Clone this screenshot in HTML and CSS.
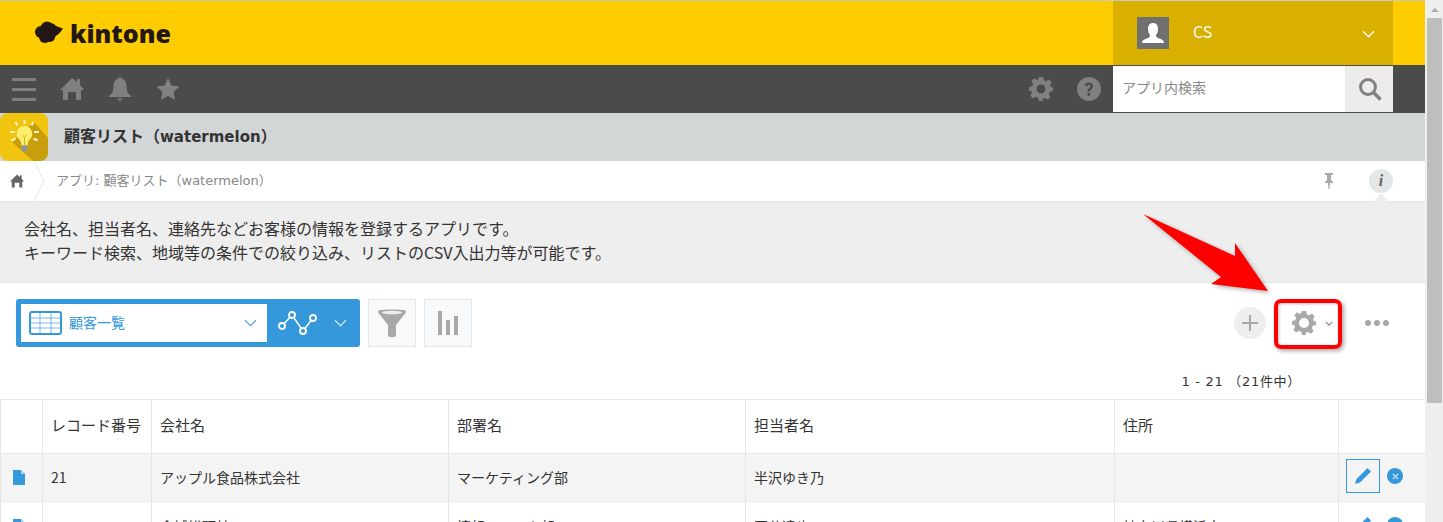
FILE: index.html
```html
<!DOCTYPE html>
<html lang="ja">
<head>
<meta charset="utf-8">
<title>顧客リスト</title>
<link rel="stylesheet" href="styles.css">
</head>
<body>
<div class="page">
  <div class="main">
    <header class="topbar">
      <div class="logo">
        <svg class="logo-cloud" viewBox="0 0 28 23"><g fill="#231815"><circle cx="6" cy="11" r="6"/><circle cx="12" cy="7" r="6.500"/><circle cx="16" cy="11" r="6.500"/><circle cx="10" cy="16" r="6"/><circle cx="15" cy="16" r="5"/><path d="M14 1.500q5 .5 7 3.500l7 2.500q-2.500 4-6 7l-6-4z"/></g></svg>
        <span class="logo-text">kintone</span>
      </div>
      <div class="user">
        <span class="avatar"><svg viewBox="0 0 32 32" width="32" height="32"><path d="M5 26c0-3 3-4 6-5 2-1 2-2 2-3-1-1-2-3-2-6 0-4 2-6 5-6s5 2 5 6c0 3-1 5-2 6 0 1 0 2 2 3 3 1 6 2 6 5z" fill="#fff"/></svg></span>
        <span class="user-name">CS</span>
        <svg class="user-caret" viewBox="0 0 14 8" width="13" height="8"><path d="M1 1l6 6 6-6" fill="none" stroke="#fff" stroke-width="1.400"/></svg>
      </div>
    </header>

    <nav class="navbar">
      <div class="nav-left">
        <svg class="ico" viewBox="0 0 24 24" width="24" height="24"><path d="M0 1h24v3H0zM0 11h24v3H0zM0 21h24v3H0z" fill="#808080"/></svg>
        <svg class="ico" viewBox="0 0 24 24" width="24" height="24"><path d="M12 1l5 4V2h3v6l4 5h-3v10h-5v-8H8v8H3V13H0z" fill="#808080"/></svg>
        <svg class="ico" viewBox="0 0 24 24" width="24" height="24"><path d="M10.500 1.500a1.500 1.500 0 0 1 3 0C17 2.500 18.500 5.500 18.500 9c0 5 1.500 8 4.500 10 .5 .5 0 1-1 1H2c-1 0-1.500-.5-1-1 3-2 4.500-5 4.500-10 0-3.500 1.500-6.500 5-7.500zM9.500 21.500h5c-.5 1.500-1.500 2-2.500 2s-2-.5-2.500-2z" fill="#808080"/></svg>
        <svg class="ico" viewBox="0 0 24 24" width="24" height="24"><path d="M12 1l3.400 7.500 8.100 .9-6 5.500 1.700 8.100-7.200-4.100-7.200 4.100 1.700-8.100-6-5.500 8.100-.9z" fill="#808080"/></svg>
      </div>
      <div class="nav-right">
        <svg class="ico" viewBox="0 0 24 24" width="24" height="24"><path fill-rule="evenodd" d="M10 0h4l.7 3.300 2.300 1 2.900-1.800 2.800 2.800L21 8.200l.9 2.200L24 10v4l-3.200.7-1 2.300 1.800 2.900-2.800 2.800-2.900-1.800-2.200.9L14 24h-4l-.7-3.200-2.300-1-2.900 1.800-2.800-2.800L3 15.900l-.9-2.200L0 14v-4l3.200-.7 1-2.300-1.800-2.900 2.800-2.800L7.100 3l2.200-.9zM12 7.500a4.500 4.500 0 1 0 0 9 4.500 4.500 0 0 0 0-9z" fill="#808080"/></svg>
        <svg class="ico" viewBox="0 0 24 24" width="24" height="24"><circle cx="12" cy="12" r="12" fill="#808080"/><path d="M8 9c0-2.500 2-3.500 4-3.500s4 1.200 4 3.500c0 3-3 3-3 5.500h-2.500c0-3.500 2.800-3.500 2.800-5.500 0-.8-.5-1.300-1.300-1.300s-1.400 .5-1.500 1.500zM10.500 16h2.700v2.700h-2.700z" fill="#4b4b4b"/></svg>
      </div>
      <div class="search">
        <span class="search-field">アプリ内検索</span>
        <span class="search-btn"><svg viewBox="0 0 24 24" width="24" height="24"><circle cx="10" cy="10" r="7.500" fill="none" stroke="#808080" stroke-width="3"/><path d="M15.500 15.500l7 7" stroke="#808080" stroke-width="3.500" fill="none"/></svg></span>
      </div>
    </nav>

    <div class="appbar">
      <span class="app-icon">
        <svg viewBox="0 0 48 48" width="48" height="48">
          <path d="M0 8a8 8 0 0 1 8-8h32a8 8 0 0 1 8 8v32a8 8 0 0 1-8 8H8a8 8 0 0 1-8-8z" fill="#f1c40f"/>
          <path d="M34 9l14 16v15a8 8 0 0 1-8 8h-7L12 29z" fill="#c99e0d"/>
          <path d="M24.500 13a7.800 7.800 0 0 1 5 13.700c-1.200 1.200-1.800 3-1.800 5.800h-6.400c0-2.800-.6-4.600-1.800-5.800a7.800 7.800 0 0 1 5-13.700z" fill="#fbee6c"/>
          <path d="M21.500 32.500h6v3.500l-1.500 1.500-.5 2h-2l-.5-2-1.500-1.500z" fill="#8c979a"/>
          <path d="M24.500 7v4M15.500 9l2 3.500M33.500 9l-2 3.500M10 19h5M34 19h5M11.500 27.500l4-2M37.500 27.500l-4-2" stroke="#fdf6c0" stroke-width="2" fill="none"/>
          <path d="M22.500 22l2 2.500 2-2.500M24.500 24.500v8" stroke="#d4b312" fill="none"/>
        </svg>
      </span>
      <span class="app-title">顧客リスト（<span class="latin">watermelon</span>）</span>
    </div>

    <div class="crumbs">
      <svg class="crumb-home" viewBox="0 0 24 24" width="14" height="14"><path d="M12 1l5 4V2h3v6l4 5h-3v10h-5v-8H8v8H3V13H0z" fill="#666"/></svg>
      <svg class="crumb-sep" viewBox="0 0 12 40" width="12" height="40"><path d="M0 0l10 20L0 40" fill="none" stroke="#e3e7e8"/></svg>
      <span class="crumb-text">アプリ: 顧客リスト（watermelon）</span>
      <div class="crumb-tools">
        <svg viewBox="0 0 10 16" width="10" height="16"><path d="M1 0h8v2H7v5l2 2v1H6l-.5 6h-1L4 10H1V9l2-2V2H1z" fill="#a8a8a8"/></svg>
        <span class="info">i</span>
      </div>
    </div>

    <section class="desc">
      <span class="desc-notch"></span>
      <p>会社名、担当者名、連絡先などお客様の情報を登録するアプリです。</p>
      <p>キーワード検索、地域等の条件での絞り込み、リストのCSV入出力等が可能です。</p>
    </section>

    <div class="toolbar">
      <div class="viewpick">
        <div class="view-select">
          <svg viewBox="0 0 33 24" width="33" height="24"><rect x="1" y="1" width="31" height="22" rx="2" fill="#fff" stroke="#3498db" stroke-width="2"/><path d="M1 7h31M1 12h31M1 17h31M11 1v22M22 1v22" stroke="#3498db" fill="none" opacity=".65"/></svg>
          <span class="view-name">顧客一覧</span>
          <svg class="view-caret" viewBox="0 0 14 8" width="13" height="8"><path d="M1 1l6 6 6-6" fill="none" stroke="#3498db" stroke-width="1.100"/></svg>
        </div>
        <svg class="graph-ico" viewBox="0 0 42 26" width="42" height="26"><path d="M5 16L15 5l11 16 10-13" stroke="#fff" stroke-width="1.500" fill="none"/><circle cx="5" cy="16" r="3" fill="#3498db" stroke="#fff" stroke-width="1.800"/><circle cx="15" cy="5" r="3" fill="#3498db" stroke="#fff" stroke-width="1.800"/><circle cx="26" cy="21" r="3" fill="#3498db" stroke="#fff" stroke-width="1.800"/><circle cx="36" cy="8" r="3" fill="#3498db" stroke="#fff" stroke-width="1.800"/></svg>
        <svg class="graph-caret" viewBox="0 0 14 8" width="13" height="8"><path d="M1 1l6 6 6-6" fill="none" stroke="#fff" stroke-width="1.100"/></svg>
      </div>
      <span class="tool-btn"><svg viewBox="0 0 30 30" width="30" height="30"><path d="M1 3c0-2 28-2 28 0 0 1-1 3-3 5l-7 9v11c0 1.500-8 1.500-8 0V17L4 8C2 6 1 4 1 3z" fill="#a8a8a8"/><ellipse cx="15" cy="4.500" rx="10" ry="1.800" fill="#eee"/></svg></span>
      <span class="tool-btn"><svg viewBox="0 0 20 24" width="20" height="24"><path d="M0 0h4v24H0zM8 9h4v15H8zM16 5h4v19h-4z" fill="#a8a8a8"/></svg></span>
      <div class="toolbar-right">
        <span class="add-btn"><svg viewBox="0 0 16 16" width="16" height="16"><path d="M8 0v16M0 8h16" stroke="#a8a8a8" stroke-width="2" fill="none"/></svg></span>
        <span class="gear-btn">
          <svg viewBox="0 0 24 24" width="24" height="24"><path fill-rule="evenodd" d="M10 0h4l.7 3.300 2.300 1 2.900-1.800 2.800 2.800L21 8.200l.9 2.200L24 10v4l-3.200.7-1 2.300 1.800 2.900-2.800 2.800-2.900-1.800-2.200.9L14 24h-4l-.7-3.200-2.300-1-2.900 1.800-2.800-2.800L3 15.900l-.9-2.200L0 14v-4l3.200-.7 1-2.300-1.800-2.900 2.800-2.800L7.100 3l2.200-.9zM12 7a5 5 0 1 0 0 10 5 5 0 0 0 0-10z" fill="#a8a8a8"/></svg>
          <svg viewBox="0 0 10 6" width="8" height="5"><path d="M1 1l4 4 4-4" fill="none" stroke="#888" stroke-width="1.500"/></svg>
        </span>
        <svg class="more" viewBox="0 0 24 6" width="24" height="6"><circle cx="3" cy="3" r="3" fill="#a8a8a8"/><circle cx="12" cy="3" r="3" fill="#a8a8a8"/><circle cx="21" cy="3" r="3" fill="#a8a8a8"/></svg>
      </div>
    </div>

    <div class="pager">1 - 21 （21件中）</div>

    <table class="records">
      <colgroup>
        <col class="c-doc"><col class="c-no"><col class="c-co"><col class="c-dept"><col class="c-rep"><col class="c-addr"><col class="c-act">
      </colgroup>
      <thead>
        <tr><th></th><th>レコード番号</th><th>会社名</th><th>部署名</th><th>担当者名</th><th>住所</th><th></th></tr>
      </thead>
      <tbody>
        <tr class="hover">
          <td class="doc"><svg viewBox="0 0 12 15" width="12" height="15"><path d="M0 0h8l4 4v11H0z" fill="#3498db"/><path d="M8 0v4h4z" fill="#a9d3ef"/></svg></td>
          <td>21</td><td>アップル食品株式会社</td><td>マーケティング部</td><td>半沢ゆき乃</td><td></td>
          <td class="act">
            <span class="edit"><svg viewBox="0 0 16 16" width="16" height="16"><path d="M12.500 0L16 3.500 5 14.500 0 16l1.500-5z" fill="#3498db"/></svg></span>
            <span class="del"><svg viewBox="0 0 8 8" width="7" height="7"><path d="M1 1l6 6M7 1L1 7" stroke="#cfe6f6" stroke-width="1.600"/></svg></span>
          </td>
        </tr>
        <tr>
          <td class="doc"><svg viewBox="0 0 12 15" width="12" height="15"><path d="M0 0h8l4 4v11H0z" fill="#3498db"/><path d="M8 0v4h4z" fill="#a9d3ef"/></svg></td>
          <td></td><td>金城総研社</td><td>情報システム部</td><td>国分達也</td><td>神奈川県横浜市</td>
          <td class="act">
            <span class="edit plain"><svg viewBox="0 0 16 16" width="16" height="16"><path d="M12.500 0L16 3.500 5 14.500 0 16l1.500-5z" fill="#3498db"/></svg></span>
            <span class="del"><svg viewBox="0 0 8 8" width="7" height="7"><path d="M1 1l6 6M7 1L1 7" stroke="#cfe6f6" stroke-width="1.600"/></svg></span>
          </td>
        </tr>
      </tbody>
    </table>
  </div>

  <div class="scrollbar">
    <span class="scroll-up"></span>
    <span class="scroll-thumb"></span>
  </div>

  <div class="callout">
    <svg class="arrow" viewBox="0 0 140 90" width="140" height="90"><path d="M3 4L95 46V33L128 81 71 74 81 67z" fill="#f00"/></svg>
    <span class="callout-box"></span>
  </div>
</div>
</body>
</html>
```
FILE: styles.css
```css
* { box-sizing: border-box; }
html, body { margin: 0; height: 100%; overflow: hidden; }
body {
  font-family: "DejaVu Sans", "Noto Sans CJK JP", sans-serif;
  font-size: 14px;
  color: #333;
  background: #fff;
}
svg { display: block; flex: none; }
p { margin: 0; }

.page { position: relative; display: flex; width: 1443px; height: 522px; overflow: hidden; }
.main { width: 1425px; flex: none; }

.topbar {
  display: flex; justify-content: space-between;
  height: 65px; background: #fc0;
  border-top: 1px solid #c8c8c8;
}
.logo { display: flex; align-items: center; gap: 7px; padding: 0 0 0 35px; }
.logo-cloud { width: 28px; height: 23px; margin-top: -2px; }
.logo-text {
  font-family: "Open Sans", sans-serif; font-weight: 800; font-size: 25px;
  color: #231815;
}
.user {
  display: flex; align-items: center;
  width: 280px; margin-right: 32px; padding: 0 18px 0 24px;
  background: #dab000; color: #fff;
}
.avatar { width: 32px; height: 32px; background: #6f7170; }
.user-name { margin-left: 24px; flex: 1; padding-bottom: 4px; font-family: "Noto Sans CJK JP", sans-serif; font-size: 16px; }
.user-caret { margin-top: 2px; }

.navbar { display: flex; align-items: center; height: 48px; background: #4b4b4b; }
.nav-left { display: flex; gap: 24px; padding-left: 12px; flex: 1; }
.nav-right { display: flex; gap: 24px; margin-right: 12px; }
.ico { display: block; }
.search { display: flex; width: 280px; height: 48px; margin-right: 32px; padding: 1px 0; }
.search-field {
  flex: 1; background: #fff; padding-left: 9px;
  line-height: 42px; font-size: 14px; color: #888;
  font-family: "Noto Sans CJK JP", sans-serif;
}
.search-btn {
  width: 48px; background: #ececec; border-left: 1px solid #e3e7e8;
  display: flex; align-items: center; justify-content: center;
}

.appbar { display: flex; align-items: center; height: 48px; background: #d2d6d7; }
.app-icon { width: 48px; height: 48px; }
.app-title { margin-left: 16px; padding-bottom: 5px; font-weight: 700; font-size: 16px; color: #333; }
.latin { font-size: 15px; }

.crumbs { display: flex; align-items: center; height: 41px; border-bottom: 1px solid #e3e7e8; }
.crumb-home { margin-left: 10px; margin-top: -1px; }
.crumb-sep { margin: -1px 0 0 10px; }
.crumb-text { margin-left: 10px; padding-bottom: 3px; font-size: 13px; color: #888; flex: 1; }
.crumb-tools { display: flex; align-items: center; gap: 35px; padding-right: 32px; }
.info {
  width: 24px; height: 24px; border-radius: 50%; background: #e3e7e8;
  color: #666; font: italic 700 16px/24px "Liberation Serif", serif; text-align: center;
}

.desc { position: relative; height: 81px; padding: 14px 24px 0; background: #eee; font-size: 16px; line-height: 24px; color: #333; border-bottom: 1px solid #e3e7e8; font-family: "Noto Sans CJK JP", sans-serif; }
.desc-notch {
  position: absolute; top: -6px; left: 1375px; width: 12px; height: 12px;
  background: #eee; transform: rotate(45deg);
}

.toolbar { display: flex; align-items: flex-start; padding: 16px 0 0 16px; height: 86px; }
.viewpick {
  display: flex; align-items: center; width: 344px; height: 48px;
  background: #3498db; border-radius: 3px; padding: 5px;
}
.view-select { display: flex; align-items: center; width: 246px; height: 38px; background: #fff; padding: 0 10px 0 8px; }
.view-name { margin-left: 7px; flex: 1; padding-bottom: 2px; font-size: 14px; color: #3498db; font-family: "Noto Sans CJK JP", sans-serif; }
.graph-ico { margin-left: 10px; }
.graph-caret { margin-left: 15px; }
.tool-btn {
  display: flex; align-items: center; justify-content: center;
  width: 48px; height: 48px; margin-left: 8px;
  background: #f7f9fa; border: 1px solid #e3e7e8;
}
.toolbar-right { display: flex; align-items: center; height: 48px; margin-left: auto; padding-right: 36px; }
.add-btn {
  display: flex; align-items: center; justify-content: center;
  width: 32px; height: 32px; border-radius: 50%; background: #eee;
}
.gear-btn { display: flex; align-items: center; gap: 9px; margin-left: 26px; width: 48px; }
.gear-btn svg:last-child { margin-top: 1px; }
.more { margin-left: 25px; }

.pager { height: 30px; padding-right: 124px; text-align: right; font-size: 13px; letter-spacing: .7px; line-height: 26px; color: #333; }

.records { width: 1425px; table-layout: fixed; border-collapse: collapse; font-family: "Noto Sans CJK JP", sans-serif; font-size: 14px; }
.c-doc { width: 42px; } .c-no { width: 109px; } .c-co { width: 297px; } .c-dept { width: 297px; }
.c-rep { width: 369px; } .c-addr { width: 224px; } .c-act { width: 87px; }
.records th, .records td { border: 1px solid #e3e7e8; padding: 0 8px 2px; text-align: left; font-weight: 400; white-space: nowrap; }
.records th { height: 54px; padding-bottom: 4px; font-size: 15px; }
.records td { height: 49px; }
.records tbody tr td { border-top: 0; border-bottom: 0; }
.hover td { background: #f4f4f4; }
.records .doc { padding: 0 0 2px 12px; }
.records .act { padding: 0 0 4px 7px; font-size: 0; }
.edit {
  display: inline-flex; align-items: center; justify-content: center;
  width: 34px; height: 34px; border: 1px solid #3498db; vertical-align: middle;
}
.edit.plain { border-color: transparent; }
.del {
  display: inline-flex; align-items: center; justify-content: center;
  width: 16px; height: 16px; margin-left: 7px; border-radius: 50%;
  background: #3498db; vertical-align: middle;
}

.scrollbar { width: 18px; flex: none; background: #efefef; padding: 0 1px 0 2px; }
.scroll-up {
  display: block; width: 0; height: 0; margin: 8px auto 6px;
  border: 4px solid transparent; border-top: 0; border-bottom: 4px solid #a8a8a8;
}
.scroll-thumb { display: block; height: 385px; background: #bebebe; }

.callout { position: absolute; inset: 0; pointer-events: none; }
.arrow { position: absolute; left: 1140px; top: 210px; filter: drop-shadow(2px 2px 2px rgba(0,0,0,.3)); }
.callout-box {
  position: absolute; left: 1274px; top: 299px; width: 68px; height: 50px;
  border: 4px solid #f00; border-radius: 7px;
  box-shadow: 2px 2px 4px rgba(0,0,0,.35), inset 1px 1px 3px rgba(0,0,0,.25);
}
```
